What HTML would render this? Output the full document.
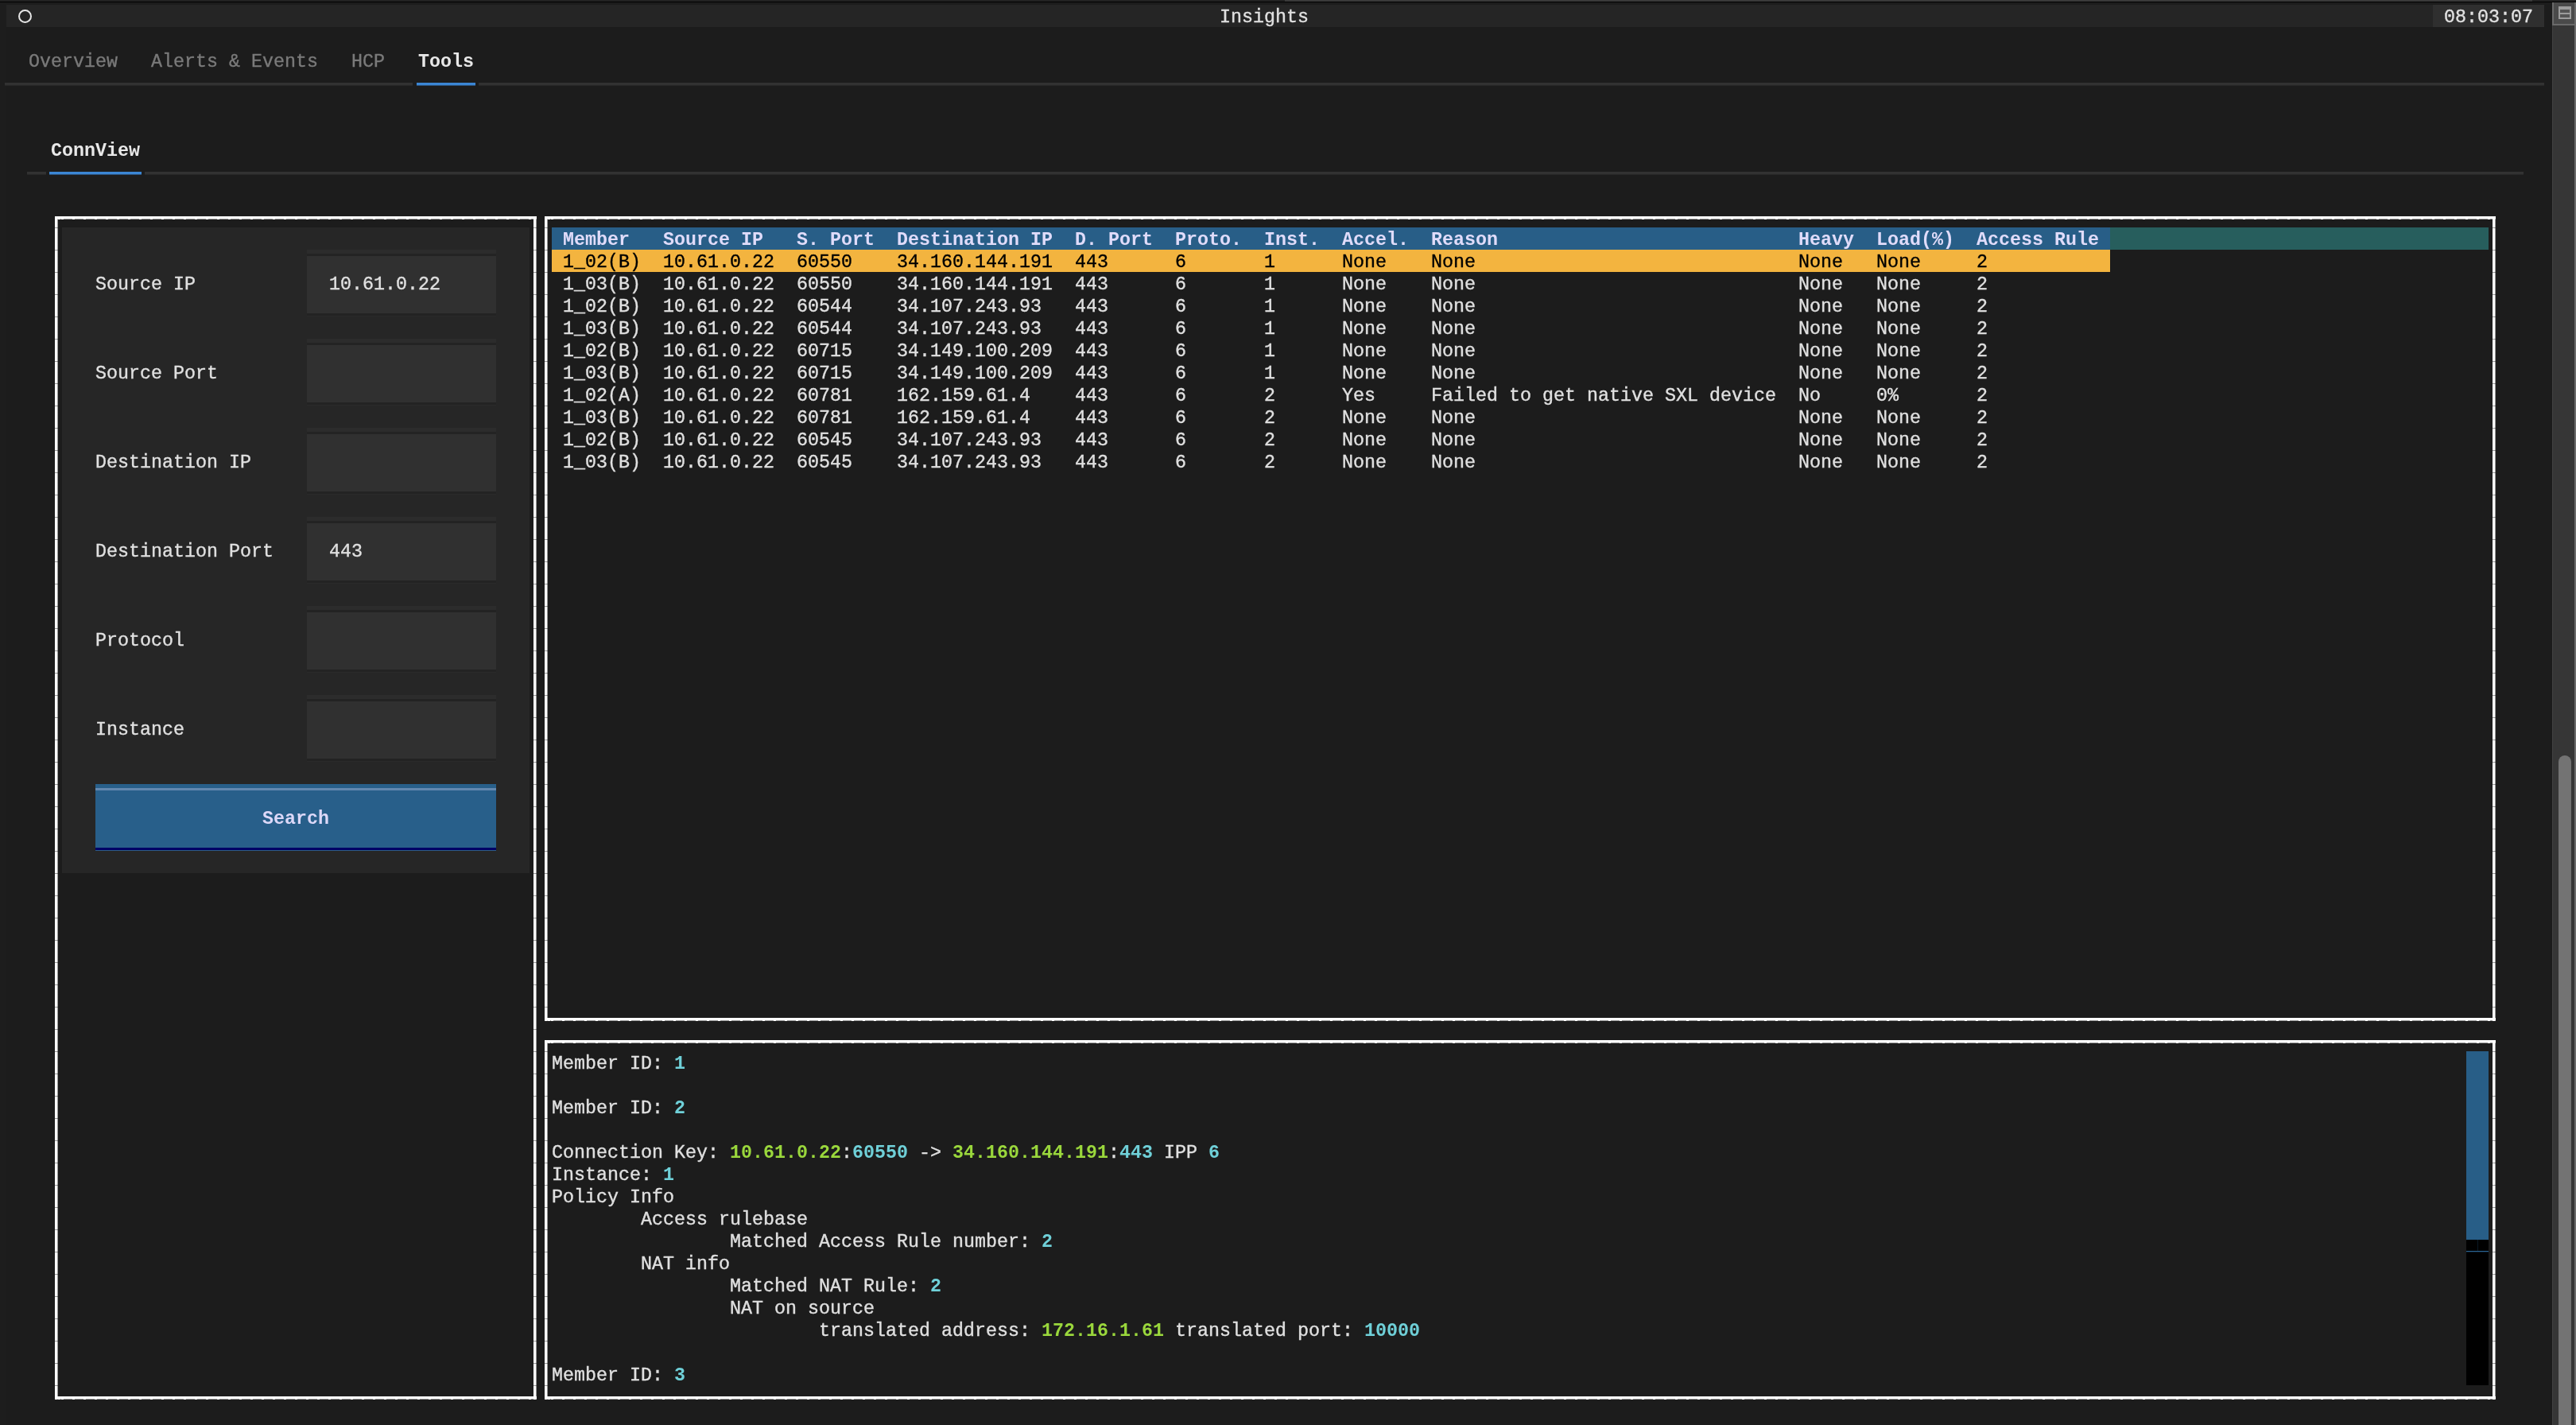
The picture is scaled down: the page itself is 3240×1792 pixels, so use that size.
<!DOCTYPE html>
<html><head><meta charset="utf-8"><style>
html,body{margin:0;padding:0;}
body{width:3240px;height:1792px;background:#1c1c1c;position:relative;overflow:hidden;font-family:"Liberation Mono",monospace;}
.r{position:absolute;box-sizing:content-box;}
.t{position:absolute;will-change:transform;-webkit-text-stroke:0.35px currentColor;white-space:pre;font-size:23.33px;line-height:28px;height:28px;}
b{font-weight:bold;-webkit-text-stroke:0;}
.bd{-webkit-text-stroke:0;}
</style></head><body>
<div class="r" style="left:0px;top:0px;width:3240px;height:2px;background:#222222;"></div>
<div class="r" style="left:1616px;top:0px;width:1569px;height:2px;background:#3a3a3a;"></div>
<div class="r" style="left:0px;top:2px;width:3240px;height:1px;background:#000000;"></div>
<div class="r" style="left:0px;top:3px;width:8px;height:1789px;background:#1d1d1d;"></div>
<div class="r" style="left:8px;top:6px;width:3192px;height:28px;background:#252525;"></div>
<div class="r" style="left:23px;top:12px;width:13px;height:13px;border:2.5px solid #e6e6e6;border-radius:50%;"></div>
<div class="t" style="left:1534px;top:8px;color:#e0e0e0;">Insights</div>
<div class="r" style="left:3060px;top:6px;width:140px;height:28px;background:#2f2f2f;"></div>
<div class="t" style="left:3074px;top:8px;color:#e0e0e0;">08:03:07</div>
<div class="r" style="left:3210px;top:3px;width:30px;height:1789px;background:#363636;"></div>
<div class="r" style="left:3210px;top:3px;width:1px;height:1789px;background:#424242;"></div>
<div class="r" style="left:3210px;top:3px;width:28px;height:29px;background:#4a4a4a;"></div>
<div class="r" style="left:3210px;top:3px;width:2px;height:29px;background:#6a6a6a;"></div>
<div class="r" style="left:3210px;top:30px;width:28px;height:2px;background:#6a6a6a;"></div>
<div class="r" style="left:3238px;top:3px;width:2px;height:1789px;background:#6a6a6a;"></div>
<div class="r" style="left:3218px;top:8px;width:16px;height:16px;background:#9c9c9c;"></div>
<div class="r" style="left:3220px;top:12px;width:12px;height:4px;background:#555555;"></div>
<div class="r" style="left:3220px;top:18px;width:12px;height:4px;background:#555555;"></div>
<div class="r" style="left:3218px;top:950px;width:16px;height:900px;background:#737373;border-radius:8px;"></div>
<div class="t" style="left:36px;top:64px;color:#7a7a7a;">Overview</div>
<div class="t" style="left:190px;top:64px;color:#7a7a7a;">Alerts &amp; Events</div>
<div class="t" style="left:442px;top:64px;color:#7a7a7a;">HCP</div>
<div class="t bd" style="left:526px;top:64px;color:#e8e8e8;font-weight:bold;">Tools</div>
<div class="r" style="left:6px;top:104px;width:513px;height:3px;background:#323232;"></div>
<div class="r" style="left:6px;top:107px;width:513px;height:1px;background:#272727;"></div>
<div class="r" style="left:524px;top:104px;width:74px;height:3px;background:#3b86d4;"></div>
<div class="r" style="left:524px;top:107px;width:74px;height:1px;background:#2b517a;"></div>
<div class="r" style="left:602px;top:104px;width:2598px;height:3px;background:#323232;"></div>
<div class="r" style="left:602px;top:107px;width:2598px;height:1px;background:#272727;"></div>
<div class="t bd" style="left:64px;top:176px;color:#e8e8e8;font-weight:bold;">ConnView</div>
<div class="r" style="left:34px;top:216px;width:24px;height:3px;background:#323232;"></div>
<div class="r" style="left:34px;top:219px;width:24px;height:1px;background:#272727;"></div>
<div class="r" style="left:62px;top:216px;width:116px;height:3px;background:#3b86d4;"></div>
<div class="r" style="left:62px;top:219px;width:116px;height:1px;background:#2b517a;"></div>
<div class="r" style="left:182px;top:216px;width:2992px;height:3px;background:#323232;"></div>
<div class="r" style="left:182px;top:219px;width:2992px;height:1px;background:#272727;"></div>
<div class="r" style="left:78px;top:286px;width:588px;height:812px;background:#262626;"></div>
<div class="t" style="left:120px;top:344px;color:#e0e0e0;">Source IP</div>
<div class="r" style="left:386px;top:314px;width:238px;height:5px;background:#2c2c2c;"></div>
<div class="r" style="left:386px;top:319px;width:238px;height:3px;background:#232323;"></div>
<div class="r" style="left:386px;top:322px;width:238px;height:72px;background:#303030;"></div>
<div class="r" style="left:386px;top:394px;width:238px;height:3px;background:#232323;"></div>
<div class="r" style="left:386px;top:397px;width:238px;height:1px;background:#2a2a2a;"></div>
<div class="t" style="left:414px;top:344px;color:#e0e0e0;">10.61.0.22</div>
<div class="t" style="left:120px;top:456px;color:#e0e0e0;">Source Port</div>
<div class="r" style="left:386px;top:426px;width:238px;height:5px;background:#2c2c2c;"></div>
<div class="r" style="left:386px;top:431px;width:238px;height:3px;background:#232323;"></div>
<div class="r" style="left:386px;top:434px;width:238px;height:72px;background:#303030;"></div>
<div class="r" style="left:386px;top:506px;width:238px;height:3px;background:#232323;"></div>
<div class="r" style="left:386px;top:509px;width:238px;height:1px;background:#2a2a2a;"></div>
<div class="t" style="left:120px;top:568px;color:#e0e0e0;">Destination IP</div>
<div class="r" style="left:386px;top:538px;width:238px;height:5px;background:#2c2c2c;"></div>
<div class="r" style="left:386px;top:543px;width:238px;height:3px;background:#232323;"></div>
<div class="r" style="left:386px;top:546px;width:238px;height:72px;background:#303030;"></div>
<div class="r" style="left:386px;top:618px;width:238px;height:3px;background:#232323;"></div>
<div class="r" style="left:386px;top:621px;width:238px;height:1px;background:#2a2a2a;"></div>
<div class="t" style="left:120px;top:680px;color:#e0e0e0;">Destination Port</div>
<div class="r" style="left:386px;top:650px;width:238px;height:5px;background:#2c2c2c;"></div>
<div class="r" style="left:386px;top:655px;width:238px;height:3px;background:#232323;"></div>
<div class="r" style="left:386px;top:658px;width:238px;height:72px;background:#303030;"></div>
<div class="r" style="left:386px;top:730px;width:238px;height:3px;background:#232323;"></div>
<div class="r" style="left:386px;top:733px;width:238px;height:1px;background:#2a2a2a;"></div>
<div class="t" style="left:414px;top:680px;color:#e0e0e0;">443</div>
<div class="t" style="left:120px;top:792px;color:#e0e0e0;">Protocol</div>
<div class="r" style="left:386px;top:762px;width:238px;height:5px;background:#2c2c2c;"></div>
<div class="r" style="left:386px;top:767px;width:238px;height:3px;background:#232323;"></div>
<div class="r" style="left:386px;top:770px;width:238px;height:72px;background:#303030;"></div>
<div class="r" style="left:386px;top:842px;width:238px;height:3px;background:#232323;"></div>
<div class="r" style="left:386px;top:845px;width:238px;height:1px;background:#2a2a2a;"></div>
<div class="t" style="left:120px;top:904px;color:#e0e0e0;">Instance</div>
<div class="r" style="left:386px;top:874px;width:238px;height:5px;background:#2c2c2c;"></div>
<div class="r" style="left:386px;top:879px;width:238px;height:3px;background:#232323;"></div>
<div class="r" style="left:386px;top:882px;width:238px;height:72px;background:#303030;"></div>
<div class="r" style="left:386px;top:954px;width:238px;height:3px;background:#232323;"></div>
<div class="r" style="left:386px;top:957px;width:238px;height:1px;background:#2a2a2a;"></div>
<div class="r" style="left:120px;top:986px;width:504px;height:84px;background:#285f8a;"></div>
<div class="r" style="left:120px;top:991px;width:504px;height:3px;background:#6388b0;"></div>
<div class="r" style="left:120px;top:1066px;width:504px;height:3px;background:#000066;"></div>
<div class="r" style="left:120px;top:1069px;width:504px;height:1px;background:#2d5a86;"></div>
<div class="t bd" style="left:330px;top:1016px;color:#dcd8f8;font-weight:bold;">Search</div>
<div class="r" style="left:69px;top:272px;width:606px;height:4px;background:transparent;background-image:repeating-linear-gradient(to right,#fff 0px,#fff 3px,transparent 3px,transparent 14px),linear-gradient(to bottom,#fff 0px,#fff 3px,rgba(255,255,255,.55) 3px,rgba(255,255,255,.55) 4px);background-size:auto 4px,auto 4px;background-repeat:repeat-x,no-repeat;background-position:8px 0,0 0;"></div>
<div class="r" style="left:69px;top:1756px;width:606px;height:4px;background:transparent;background-image:repeating-linear-gradient(to right,#fff 0px,#fff 3px,transparent 3px,transparent 14px),linear-gradient(to bottom,#fff 0px,#fff 3px,rgba(255,255,255,.55) 3px,rgba(255,255,255,.55) 4px);background-size:auto 4px,auto 4px;background-repeat:repeat-x,no-repeat;background-position:8px 0,0 0;"></div>
<div class="r" style="left:69px;top:272px;width:4px;height:1488px;background:transparent;background-image:repeating-linear-gradient(to bottom,transparent 0px,transparent 27px,rgba(28,28,28,.45) 27px,rgba(28,28,28,.45) 28px),linear-gradient(to right,#fff 0px,#fff 3px,rgba(255,255,255,.55) 3px,rgba(255,255,255,.55) 4px);background-position:0 -13px,0 0;"></div>
<div class="r" style="left:671px;top:272px;width:4px;height:1488px;background:transparent;background-image:repeating-linear-gradient(to bottom,transparent 0px,transparent 27px,rgba(28,28,28,.45) 27px,rgba(28,28,28,.45) 28px),linear-gradient(to right,#fff 0px,#fff 3px,rgba(255,255,255,.55) 3px,rgba(255,255,255,.55) 4px);background-position:0 -13px,0 0;"></div>
<div class="r" style="left:685px;top:272px;width:2454px;height:4px;background:transparent;background-image:repeating-linear-gradient(to right,#fff 0px,#fff 3px,transparent 3px,transparent 14px),linear-gradient(to bottom,#fff 0px,#fff 3px,rgba(255,255,255,.55) 3px,rgba(255,255,255,.55) 4px);background-size:auto 4px,auto 4px;background-repeat:repeat-x,no-repeat;background-position:8px 0,0 0;"></div>
<div class="r" style="left:685px;top:1280px;width:2454px;height:4px;background:transparent;background-image:repeating-linear-gradient(to right,#fff 0px,#fff 3px,transparent 3px,transparent 14px),linear-gradient(to bottom,#fff 0px,#fff 3px,rgba(255,255,255,.55) 3px,rgba(255,255,255,.55) 4px);background-size:auto 4px,auto 4px;background-repeat:repeat-x,no-repeat;background-position:8px 0,0 0;"></div>
<div class="r" style="left:685px;top:272px;width:4px;height:1012px;background:transparent;background-image:repeating-linear-gradient(to bottom,transparent 0px,transparent 27px,rgba(28,28,28,.45) 27px,rgba(28,28,28,.45) 28px),linear-gradient(to right,#fff 0px,#fff 3px,rgba(255,255,255,.55) 3px,rgba(255,255,255,.55) 4px);background-position:0 -13px,0 0;"></div>
<div class="r" style="left:3135px;top:272px;width:4px;height:1012px;background:transparent;background-image:repeating-linear-gradient(to bottom,transparent 0px,transparent 27px,rgba(28,28,28,.45) 27px,rgba(28,28,28,.45) 28px),linear-gradient(to right,#fff 0px,#fff 3px,rgba(255,255,255,.55) 3px,rgba(255,255,255,.55) 4px);background-position:0 -13px,0 0;"></div>
<div class="r" style="left:685px;top:1308px;width:2454px;height:4px;background:transparent;background-image:repeating-linear-gradient(to right,#fff 0px,#fff 3px,transparent 3px,transparent 14px),linear-gradient(to bottom,#fff 0px,#fff 3px,rgba(255,255,255,.55) 3px,rgba(255,255,255,.55) 4px);background-size:auto 4px,auto 4px;background-repeat:repeat-x,no-repeat;background-position:8px 0,0 0;"></div>
<div class="r" style="left:685px;top:1756px;width:2454px;height:4px;background:transparent;background-image:repeating-linear-gradient(to right,#fff 0px,#fff 3px,transparent 3px,transparent 14px),linear-gradient(to bottom,#fff 0px,#fff 3px,rgba(255,255,255,.55) 3px,rgba(255,255,255,.55) 4px);background-size:auto 4px,auto 4px;background-repeat:repeat-x,no-repeat;background-position:8px 0,0 0;"></div>
<div class="r" style="left:685px;top:1308px;width:4px;height:452px;background:transparent;background-image:repeating-linear-gradient(to bottom,transparent 0px,transparent 27px,rgba(28,28,28,.45) 27px,rgba(28,28,28,.45) 28px),linear-gradient(to right,#fff 0px,#fff 3px,rgba(255,255,255,.55) 3px,rgba(255,255,255,.55) 4px);background-position:0 -13px,0 0;"></div>
<div class="r" style="left:3135px;top:1308px;width:4px;height:452px;background:transparent;background-image:repeating-linear-gradient(to bottom,transparent 0px,transparent 27px,rgba(28,28,28,.45) 27px,rgba(28,28,28,.45) 28px),linear-gradient(to right,#fff 0px,#fff 3px,rgba(255,255,255,.55) 3px,rgba(255,255,255,.55) 4px);background-position:0 -13px,0 0;"></div>
<div class="r" style="left:694px;top:286px;width:1960px;height:28px;background:#285e87;"></div>
<div class="r" style="left:2654px;top:286px;width:476px;height:28px;background:#275e5d;"></div>
<div class="r" style="left:694px;top:314px;width:1960px;height:28px;background:#f3b43f;"></div>
<div class="t bd" style="left:708px;top:288px;color:#e0dcfa;font-weight:bold;">Member</div>
<div class="t bd" style="left:834px;top:288px;color:#e0dcfa;font-weight:bold;">Source IP</div>
<div class="t bd" style="left:1002px;top:288px;color:#e0dcfa;font-weight:bold;">S. Port</div>
<div class="t bd" style="left:1128px;top:288px;color:#e0dcfa;font-weight:bold;">Destination IP</div>
<div class="t bd" style="left:1352px;top:288px;color:#e0dcfa;font-weight:bold;">D. Port</div>
<div class="t bd" style="left:1478px;top:288px;color:#e0dcfa;font-weight:bold;">Proto.</div>
<div class="t bd" style="left:1590px;top:288px;color:#e0dcfa;font-weight:bold;">Inst.</div>
<div class="t bd" style="left:1688px;top:288px;color:#e0dcfa;font-weight:bold;">Accel.</div>
<div class="t bd" style="left:1800px;top:288px;color:#e0dcfa;font-weight:bold;">Reason</div>
<div class="t bd" style="left:2262px;top:288px;color:#e0dcfa;font-weight:bold;">Heavy</div>
<div class="t bd" style="left:2360px;top:288px;color:#e0dcfa;font-weight:bold;">Load(%)</div>
<div class="t bd" style="left:2486px;top:288px;color:#e0dcfa;font-weight:bold;">Access Rule</div>
<div class="t" style="left:708px;top:316px;color:#000000;">1_02(B)  10.61.0.22  60550    34.160.144.191  443      6       1      None    None                             None   None     2</div>
<div class="t" style="left:708px;top:344px;color:#e0e0e0;">1_03(B)  10.61.0.22  60550    34.160.144.191  443      6       1      None    None                             None   None     2</div>
<div class="t" style="left:708px;top:372px;color:#e0e0e0;">1_02(B)  10.61.0.22  60544    34.107.243.93   443      6       1      None    None                             None   None     2</div>
<div class="t" style="left:708px;top:400px;color:#e0e0e0;">1_03(B)  10.61.0.22  60544    34.107.243.93   443      6       1      None    None                             None   None     2</div>
<div class="t" style="left:708px;top:428px;color:#e0e0e0;">1_02(B)  10.61.0.22  60715    34.149.100.209  443      6       1      None    None                             None   None     2</div>
<div class="t" style="left:708px;top:456px;color:#e0e0e0;">1_03(B)  10.61.0.22  60715    34.149.100.209  443      6       1      None    None                             None   None     2</div>
<div class="t" style="left:708px;top:484px;color:#e0e0e0;">1_02(A)  10.61.0.22  60781    162.159.61.4    443      6       2      Yes     Failed to get native SXL device  No     0%       2</div>
<div class="t" style="left:708px;top:512px;color:#e0e0e0;">1_03(B)  10.61.0.22  60781    162.159.61.4    443      6       2      None    None                             None   None     2</div>
<div class="t" style="left:708px;top:540px;color:#e0e0e0;">1_02(B)  10.61.0.22  60545    34.107.243.93   443      6       2      None    None                             None   None     2</div>
<div class="t" style="left:708px;top:568px;color:#e0e0e0;">1_03(B)  10.61.0.22  60545    34.107.243.93   443      6       2      None    None                             None   None     2</div>
<div class="t" style="left:694px;top:1324px;color:#e0e0e0;">Member ID: <b style="color:#6fd0d8">1</b></div>
<div class="t" style="left:694px;top:1380px;color:#e0e0e0;">Member ID: <b style="color:#6fd0d8">2</b></div>
<div class="t" style="left:694px;top:1436px;color:#e0e0e0;">Connection Key: <b style="color:#9ad73c">10.61.0.22</b>:<b style="color:#6fd0d8">60550</b> -&gt; <b style="color:#9ad73c">34.160.144.191</b>:<b style="color:#6fd0d8">443</b> IPP <b style="color:#6fd0d8">6</b></div>
<div class="t" style="left:694px;top:1464px;color:#e0e0e0;">Instance: <b style="color:#6fd0d8">1</b></div>
<div class="t" style="left:694px;top:1492px;color:#e0e0e0;">Policy Info</div>
<div class="t" style="left:694px;top:1520px;color:#e0e0e0;">        Access rulebase</div>
<div class="t" style="left:694px;top:1548px;color:#e0e0e0;">                Matched Access Rule number: <b style="color:#6fd0d8">2</b></div>
<div class="t" style="left:694px;top:1576px;color:#e0e0e0;">        NAT info</div>
<div class="t" style="left:694px;top:1604px;color:#e0e0e0;">                Matched NAT Rule: <b style="color:#6fd0d8">2</b></div>
<div class="t" style="left:694px;top:1632px;color:#e0e0e0;">                NAT on source</div>
<div class="t" style="left:694px;top:1660px;color:#e0e0e0;">                        translated address: <b style="color:#9ad73c">172.16.1.61</b> translated port: <b style="color:#6fd0d8">10000</b></div>
<div class="t" style="left:694px;top:1716px;color:#e0e0e0;">Member ID: <b style="color:#6fd0d8">3</b></div>
<div class="r" style="left:3102px;top:1322px;width:28px;height:420px;background:#000000;"></div>
<div class="r" style="left:3102px;top:1322px;width:28px;height:237px;background:#285e87;"></div>
<div class="r" style="left:3102px;top:1573px;width:28px;height:1px;background:#2a6494;"></div>
<div class="r" style="left:3102px;top:1574px;width:28px;height:1px;background:#0c1c29;"></div>
<div class="r" style="left:3116px;top:1559px;width:1px;height:14px;background:#0a1a26;"></div>
</body></html>
